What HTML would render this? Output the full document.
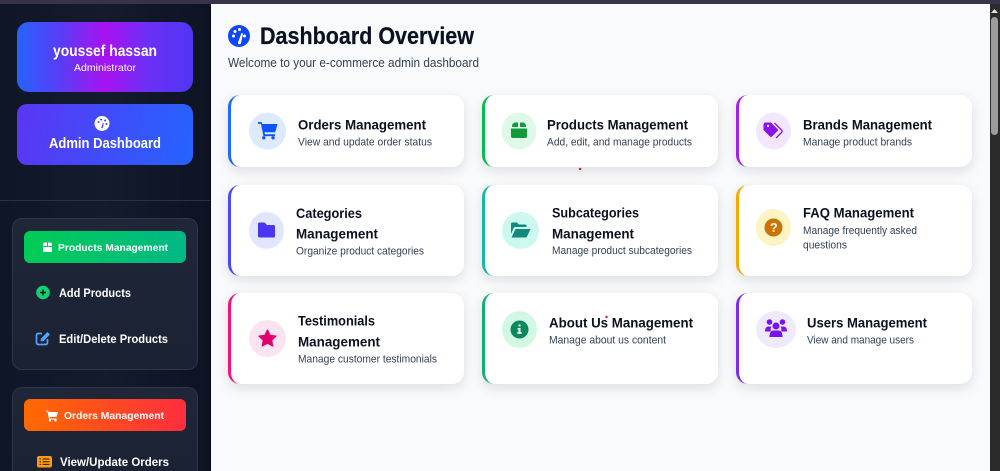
<!DOCTYPE html>
<html><head><meta charset="utf-8"><title>Dashboard Overview</title>
<style>
html,body{margin:0;padding:0;width:1000px;height:471px;overflow:hidden;background:#2b2b2b}
div{position:absolute;box-sizing:border-box}
#wrap{left:0;top:0;width:1000px;height:471px;overflow:hidden}
.card{width:236px;background:#fff;border-radius:12px;border-left:3px solid;box-shadow:0 4px 12px rgba(15,23,42,.12)}
.sec{left:12px;width:186px;background:linear-gradient(180deg,#1e2638,#1a2233);border:1px solid #2e3647;border-radius:10px}
.btn{left:24px;width:162px;height:32px;border-radius:6px}
svg{position:absolute;left:0;top:0}
text{font-family:"Liberation Sans",sans-serif;white-space:pre}
.t{font-size:14px;font-weight:700;fill:#0b1120}
.s{font-size:11px;fill:#334155}
.w{fill:#fff}
.b{font-weight:700}
</style></head><body>
<div id="wrap">
<div style="left:0;top:0;width:1000px;height:4px;background:#38334a"></div>
<div style="left:0;top:4px;width:210px;height:467px;background:linear-gradient(90deg,#0f1626,#131b2d 50%,#0d1322)"></div>
<div style="left:210px;top:4px;width:1px;height:467px;background:#05070d"></div>
<div style="left:211px;top:4px;width:779px;height:467px;background:#f8fafc"></div>
<div style="left:990px;top:4px;width:10px;height:467px;background:#2b2b2b"></div>
<div style="left:991px;top:17px;width:7px;height:118px;border-radius:4px;background:#9c9c9c"></div>

<div style="left:17px;top:22px;width:176px;height:70px;border-radius:12px;background:linear-gradient(90deg,#2563ff,#5a3cf5 25%,#a812f0 50%,#6a30f5 75%,#5035f5)"></div>
<div style="left:17px;top:104px;width:176px;height:61px;border-radius:10px;background:linear-gradient(100deg,#5b36f2,#2563ff)"></div>
<div style="left:0;top:200px;width:210px;height:1px;background:#2a3242"></div>

<div class="sec" style="top:218px;height:152px"></div>
<div class="btn" style="top:231px;background:linear-gradient(90deg,#00cc55,#00b886)"></div>
<div class="sec" style="top:387px;height:84px;border-bottom:0;border-radius:10px 10px 0 0"></div>
<div class="btn" style="top:399px;background:linear-gradient(90deg,#ff6a00,#ff2d3f)"></div>

<div class="card" style="left:228px;top:95px;height:72px;border-color:#1a6bff"></div>
<div class="card" style="left:482px;top:95px;height:72px;border-color:#00c04b"></div>
<div class="card" style="left:736px;top:95px;height:72px;border-color:#a020f0"></div>
<div class="card" style="left:228px;top:185px;height:91px;border-color:#4f46ff"></div>
<div class="card" style="left:482px;top:185px;height:91px;border-color:#14b8a6"></div>
<div class="card" style="left:736px;top:185px;height:91px;border-color:#f5a800"></div>
<div class="card" style="left:228px;top:293px;height:91px;border-color:#f5127f"></div>
<div class="card" style="left:482px;top:293px;height:91px;border-color:#10b070"></div>
<div class="card" style="left:736px;top:293px;height:91px;border-color:#7c2cf0"></div>

<svg width="1000" height="471" viewBox="0 0 1000 471">
<!-- scrollbar arrow -->
<path d="M994.5 9l3.500 4h-7z" fill="#e0e0e0"/>

<!-- sidebar text -->
<text class="w b" x="53" y="56" font-size="16" textLength="104" lengthAdjust="spacingAndGlyphs">youssef hassan</text>
<text class="w" x="74" y="71" font-size="10.500" textLength="62" lengthAdjust="spacingAndGlyphs">Administrator</text>
<circle cx="102" cy="123.500" r="7.500" fill="#fff"/>
<g fill="#4a45f5"><circle cx="98.500" cy="122" r="1"/><circle cx="101" cy="119.500" r="1"/><circle cx="105" cy="120.500" r="1"/><circle cx="106.500" cy="124" r="1"/><path d="M101.200 128l1.600-5 1 .4-1 4.800z"/></g>
<text class="w b" x="49" y="148" font-size="14.500" textLength="112" lengthAdjust="spacingAndGlyphs">Admin Dashboard</text>

<path d="M43 246h4v-3.500h-2.500q-1.200 0-1.500 1.200zM48 246h4l-.2-2.300q-.3-1.200-1.500-1.200H48zM43 247h9v4q0 1-1 1h-7q-1 0-1-1z" fill="#fff"/>
<text class="w b" x="58" y="251" font-size="10.500" textLength="110" lengthAdjust="spacingAndGlyphs">Products Management</text>

<circle cx="43" cy="292.500" r="6.800" fill="#0ed36e"/>
<path d="M43 289.500v6M40 292.500h6" stroke="#0c1a20" stroke-width="1.500"/>
<text class="w b" x="59" y="297" font-size="11.500" textLength="72" lengthAdjust="spacingAndGlyphs">Add Products</text>

<path d="M42 333.500h-3.500q-2 0-2 2v7q0 2 2 2h7q2 0 2-2v-3.500" fill="none" stroke="#4da6ff" stroke-width="1.700"/>
<path d="M41 338.500l6.500-6.500 2.500 2.500-6.500 6.500-3 .5z" fill="#4da6ff"/>
<text class="w b" x="59" y="343" font-size="11.500" textLength="109" lengthAdjust="spacingAndGlyphs">Edit/Delete Products</text>

<path d="M46 410.500h2l.6 1.500h9.400l-1.500 5h-6.800l.3 1.500h6.500v1h-7.400l-1.700-8h-1.400z" fill="#fff"/>
<circle cx="50" cy="420.500" r="1.200" fill="#fff"/><circle cx="55.500" cy="420.500" r="1.200" fill="#fff"/>
<text class="w b" x="64" y="419" font-size="10.500" textLength="100" lengthAdjust="spacingAndGlyphs">Orders Management</text>

<rect x="37" y="456" width="15" height="11.500" rx="2" fill="#ff9a0a"/>
<path d="M39.500 459h1.500M39.500 461.700h1.500M39.500 464.400h1.500M42.500 459h7M42.500 461.700h7M42.500 464.400h7" stroke="#2a1c10" stroke-width="1"/>
<text class="w b" x="60" y="466" font-size="11.500" textLength="109" lengthAdjust="spacingAndGlyphs">View/Update Orders</text>

<!-- header -->
<circle cx="239" cy="36" r="11" fill="#1247f5"/>
<g fill="#fff"><circle cx="233.500" cy="36" r="1.500"/><circle cx="235" cy="31.500" r="1.500"/><circle cx="239.500" cy="29.500" r="1.500"/><circle cx="244.500" cy="36" r="1.500"/><path d="M238 42.500l3.500-9.500 1.500.5-2 9.500a1.500 1.500 0 0 1-3-.5z"/></g>
<text x="260" y="44" font-size="24" font-weight="700" fill="#0b1120" stroke="#0b1120" stroke-width=".2" textLength="214" lengthAdjust="spacingAndGlyphs">Dashboard Overview</text>
<text x="228" y="67" font-size="12.500" fill="#334155" textLength="251" lengthAdjust="spacingAndGlyphs">Welcome to your e-commerce admin dashboard</text>

<!-- Orders -->
<ellipse cx="267.500" cy="131" rx="18.500" ry="18.500" fill="#dde9fd"/>
<path d="M258 122h3.500l.8 2h15.200l-2.300 8.300h-10.700l.4 2h10.100v1.800h-11.500l-2.600-12.200H258z" fill="#0f55f5"/>
<circle cx="263.800" cy="137.800" r="1.700" fill="#0f55f5"/><circle cx="273" cy="137.800" r="1.700" fill="#0f55f5"/>
<text class="t" x="298" y="129.500" textLength="128" lengthAdjust="spacingAndGlyphs">Orders Management</text>
<text class="s" x="298" y="145.500" textLength="134" lengthAdjust="spacingAndGlyphs">View and update order status</text>

<!-- Products -->
<ellipse cx="519" cy="131" rx="17.500" ry="18.500" fill="#dff9e8"/>
<path d="M512 126.500q0-3 2.500-4h3.500v4.500h-6zM520 122.500h3.500q2.500 1 2.500 4V127h-6zM511 128.500h16v7.500q0 2-2 2h-12q-2 0-2-2z" fill="#129a3a"/>
<text class="t" x="547" y="129.500" textLength="141" lengthAdjust="spacingAndGlyphs">Products Management</text>
<text class="s" x="547" y="145.500" textLength="145" lengthAdjust="spacingAndGlyphs">Add, edit, and manage products</text>

<!-- Brands -->
<ellipse cx="773.500" cy="131" rx="17.500" ry="18.500" fill="#f3e6ff"/>
<path d="M766 122.500h5l6.500 6.500q1 1 0 2l-5.500 5.500q-1 1-2 0l-6.500-6.500v-5q0-2.500 2.500-2.500z" fill="#8a12e8"/>
<circle cx="768" cy="126" r="1.200" fill="#f3e6ff"/>
<path d="M774.500 123l7 7q1.300 1.300 0 2.500l-5.500 5.500" fill="none" stroke="#8a12e8" stroke-width="1.300"/>
<text class="t" x="803" y="129.500" textLength="129" lengthAdjust="spacingAndGlyphs">Brands Management</text>
<text class="s" x="803" y="145.500" textLength="109" lengthAdjust="spacingAndGlyphs">Manage product brands</text>

<!-- Categories -->
<ellipse cx="266.500" cy="230.500" rx="17.500" ry="18.500" fill="#e1e6fe"/>
<path d="M258 224q0-1.500 1.500-1.500h5l2.500 2.500h6.500q1.500 0 1.500 1.500v9.500q0 1.500-1.500 1.500h-14q-1.500 0-1.500-1.500z" fill="#4a35f2"/>
<text class="t" x="296" y="218" textLength="66" lengthAdjust="spacingAndGlyphs">Categories</text>
<text class="t" x="296" y="238.500" textLength="82" lengthAdjust="spacingAndGlyphs">Management</text>
<text class="s" x="296" y="254.500" textLength="128" lengthAdjust="spacingAndGlyphs">Organize product categories</text>

<!-- Subcategories -->
<ellipse cx="520.500" cy="230.500" rx="18.500" ry="18.500" fill="#cdf8ef"/>
<path d="M511 224q0-1.500 1.500-1.500h4.500l2 2h6q1.500 0 1.500 1.500v1h-11q-1.500 0-2 1.200l-2.500 5.800z" fill="#0f8a7c"/>
<path d="M515.500 229h15l-3.500 7.500q-.4 1-1.500 1h-14z" fill="#0f8a7c"/>
<text class="t" x="552" y="217.700" textLength="87" lengthAdjust="spacingAndGlyphs">Subcategories</text>
<text class="t" x="552" y="238.500" textLength="82" lengthAdjust="spacingAndGlyphs">Management</text>
<text class="s" x="552" y="254" textLength="140" lengthAdjust="spacingAndGlyphs">Manage product subcategories</text>

<!-- FAQ -->
<ellipse cx="773.500" cy="227.500" rx="17.500" ry="18.500" fill="#fdf4c4"/>
<circle cx="773.500" cy="227.500" r="9" fill="#ca7408"/>
<text class="w b" x="770" y="232" font-size="12.500">?</text>
<text class="t" x="803" y="217.700" textLength="111" lengthAdjust="spacingAndGlyphs">FAQ Management</text>
<text class="s" x="803" y="234" textLength="114" lengthAdjust="spacingAndGlyphs">Manage frequently asked</text>
<text class="s" x="803" y="248.500" textLength="44" lengthAdjust="spacingAndGlyphs">questions</text>

<!-- Testimonials -->
<ellipse cx="267.500" cy="338.500" rx="18.500" ry="18.500" fill="#fbe4f1"/>
<path d="M267.500 330l2.600 5.300 5.900.8-4.300 4.100 1 5.800-5.200-2.800-5.200 2.800 1-5.800-4.300-4.100 5.900-.8z" fill="#e2006f" stroke="#e2006f" stroke-width="1.200" stroke-linejoin="round"/>
<text class="t" x="298" y="325.700" textLength="77" lengthAdjust="spacingAndGlyphs">Testimonials</text>
<text class="t" x="298" y="346.700" textLength="82" lengthAdjust="spacingAndGlyphs">Management</text>
<text class="s" x="298" y="362.700" textLength="139" lengthAdjust="spacingAndGlyphs">Manage customer testimonials</text>

<!-- About -->
<ellipse cx="519.500" cy="329.500" rx="17.500" ry="18.500" fill="#d2f8e4"/>
<circle cx="519.500" cy="329.500" r="9" fill="#0a8a5c"/>
<path d="M518.500 324.500h2v2h-2zM517.500 328h3v4.300h1.200v1.500h-4.400v-1.500h1.200V329.500h-1z" fill="#fff"/>
<text class="t" x="549" y="327.300" textLength="144" lengthAdjust="spacingAndGlyphs">About Us Management</text>
<text class="s" x="549" y="343.700" textLength="117" lengthAdjust="spacingAndGlyphs">Manage about us content</text>

<!-- Users -->
<ellipse cx="776" cy="329.500" rx="20" ry="18.500" fill="#efe9fc"/>
<g fill="#7a12ee"><circle cx="769.500" cy="322" r="2.800"/><circle cx="782.500" cy="322" r="2.800"/><circle cx="776" cy="326" r="3.500"/>
<path d="M765 331.500q0-5 3.500-5h3q-1 1-.8 5zM787 331.500q0-5-3.500-5h-3q1 1 .8 5zM769.500 337q0-6.500 4-6.500h5q4 0 4 6.500z"/></g>
<text class="t" x="807" y="327.300" textLength="120" lengthAdjust="spacingAndGlyphs">Users Management</text>
<text class="s" x="807" y="343.700" textLength="107" lengthAdjust="spacingAndGlyphs">View and manage users</text>

<circle cx="580" cy="169" r="1.200" fill="#e8102a"/>
<circle cx="606.500" cy="317" r="1.200" fill="#e8102a"/>
</svg>
</div>
</body></html>
